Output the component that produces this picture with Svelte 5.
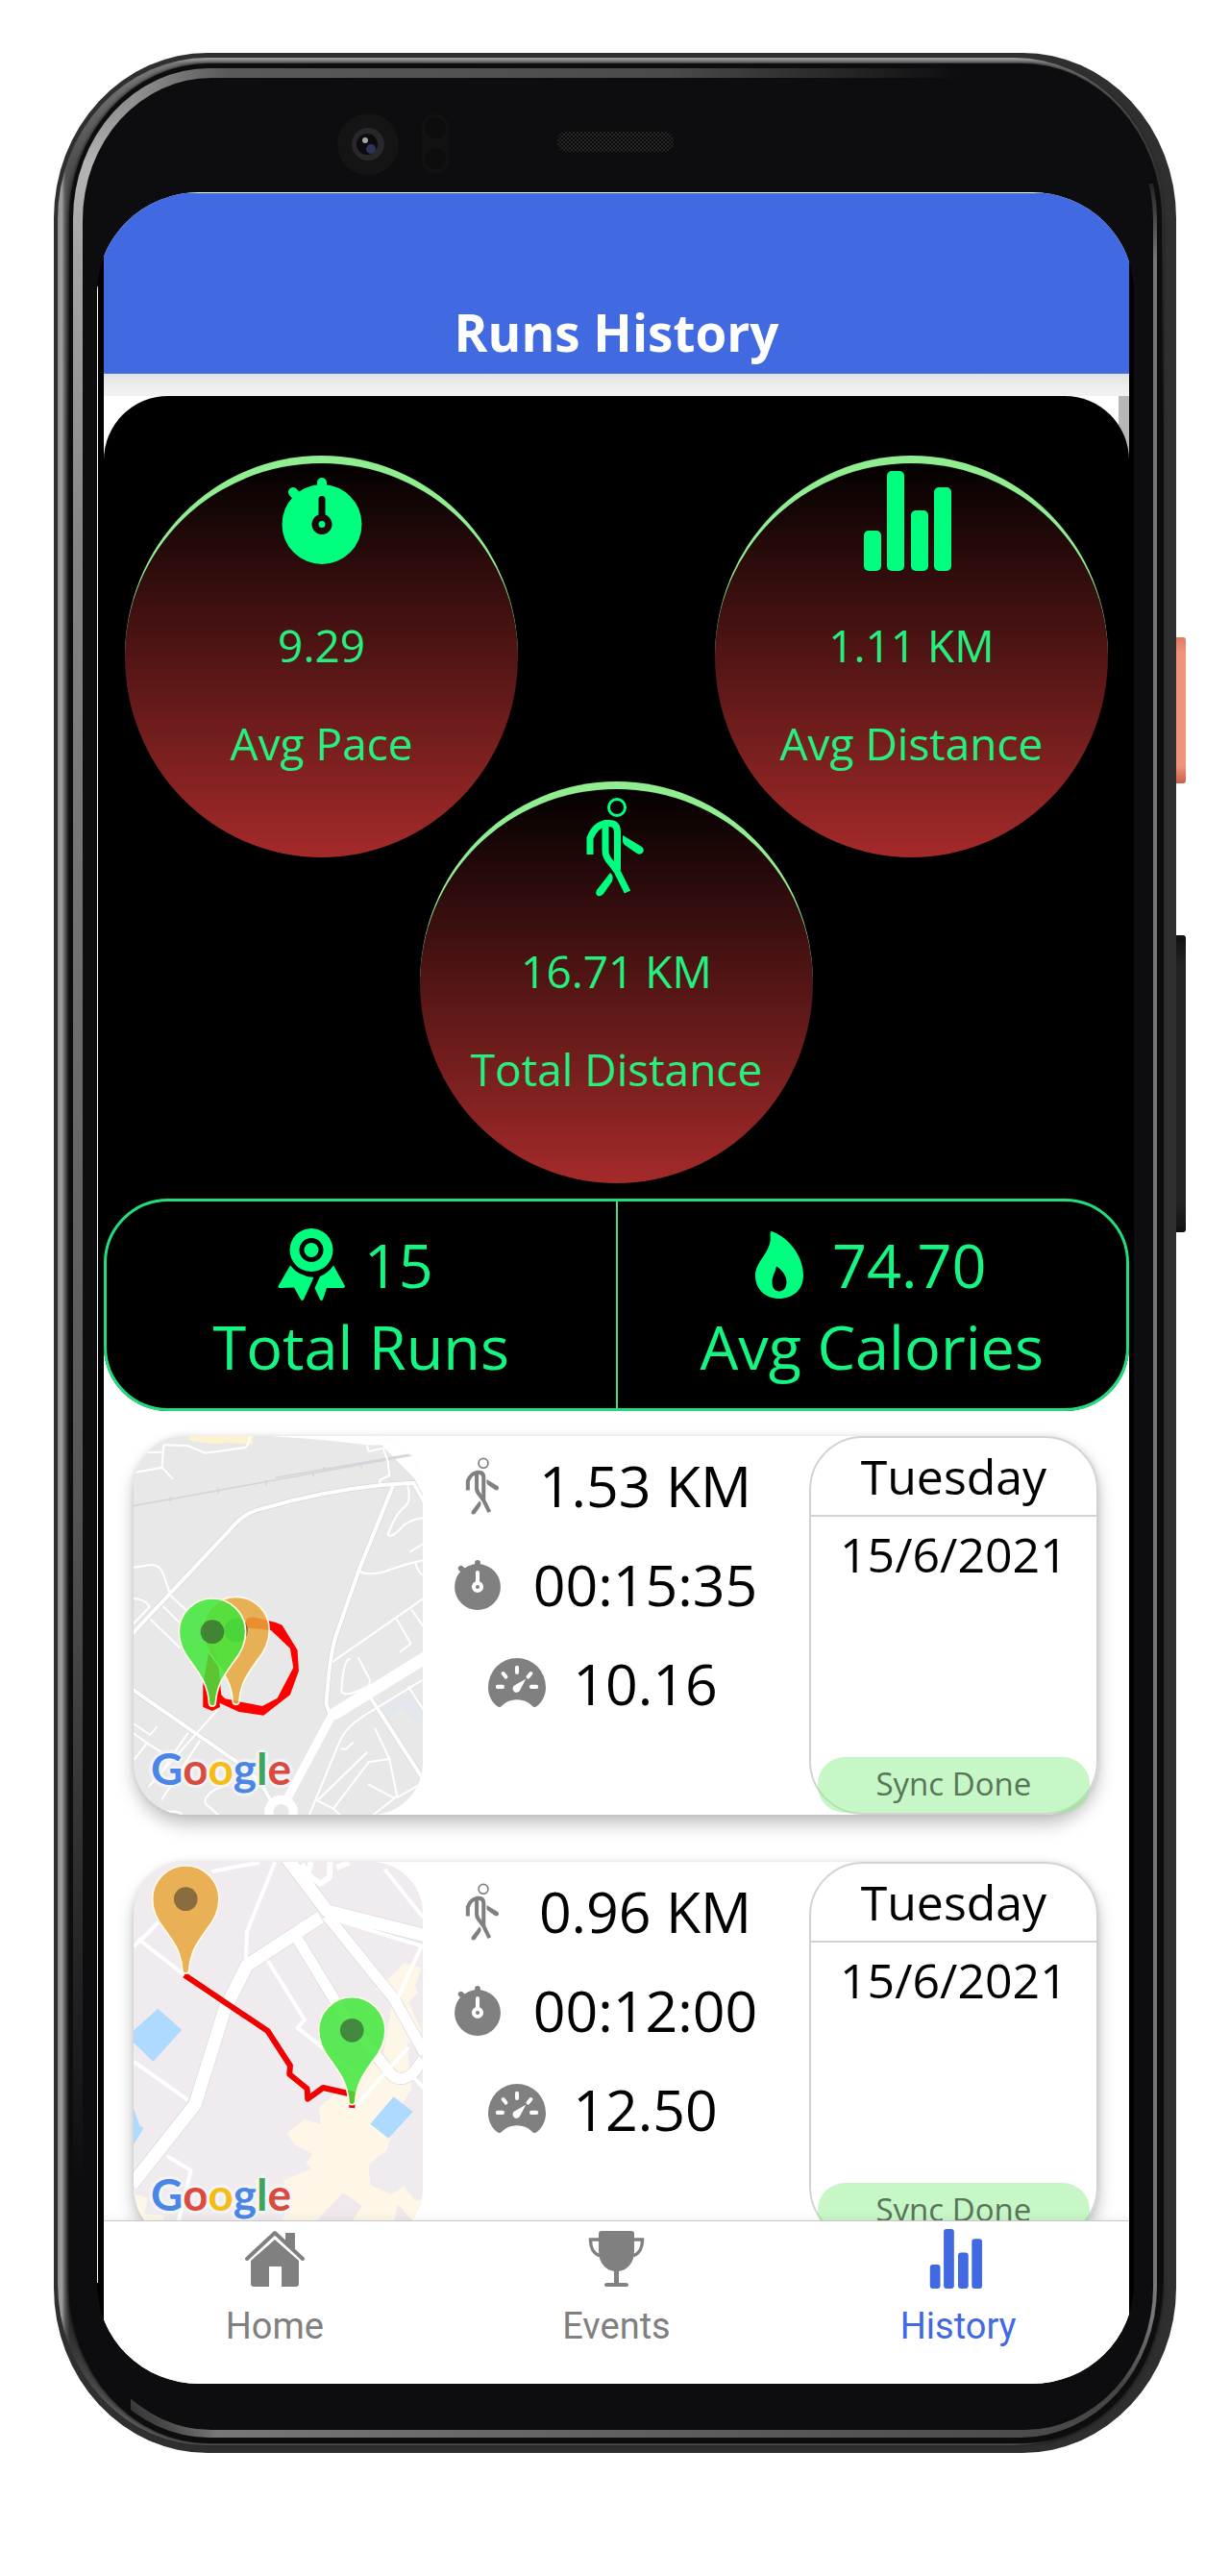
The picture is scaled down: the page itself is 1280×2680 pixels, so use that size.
<script>
  const stats = [
    { icon: 'stopwatch', value: '9.29', label: 'Avg Pace' },
    { icon: 'bars', value: '1.11 KM', label: 'Avg Distance' },
    { icon: 'walk', value: '16.71 KM', label: 'Total Distance' }
  ];
  const totals = [
    { icon: 'ribbon', value: '15', label: 'Total Runs' },
    { icon: 'flame', value: '74.70', label: 'Avg Calories' }
  ];
  const runs = [
    { map: 'loop', distance: '1.53 KM', time: '00:15:35', pace: '10.16', day: 'Tuesday', date: '15/6/2021' },
    { map: 'path', distance: '0.96 KM', time: '00:12:00', pace: '12.50', day: 'Tuesday', date: '15/6/2021' }
  ];
  const tabs = [
    { icon: 'home', label: 'Home' },
    { icon: 'trophy', label: 'Events' },
    { icon: 'bars', label: 'History', active: true }
  ];
  const google = [['G', 'blue'], ['o', 'red'], ['o', 'yellow'], ['g', 'blue'], ['l', 'green'], ['e', 'red']];
</script>

{#snippet icon(name)}
  {#if name === 'stopwatch'}
    <svg class="icon" viewBox="0 0 104 104" aria-hidden="true">
      <path fill-rule="evenodd" d="M52 14a41.500 41.500 0 1 1 0 83a41.500 41.500 0 1 1 0-83zM48.500 29.500a3.500 3.500 0 0 1 7 0V45.600a10.500 10.500 0 1 1-7 0zM52 52a3.500 3.500 0 1 0 0 7a3.500 3.500 0 1 0 0-7z" />
      <path class="line" stroke-width="10" stroke-linecap="round" d="M52 12v6M22 22l6 7" />
    </svg>
  {:else if name === 'bars'}
    <svg class="icon" viewBox="0 0 104 104" aria-hidden="true">
      <rect x="3" y="62" width="18" height="42" rx="5" />
      <rect x="27" y="0" width="18" height="104" rx="5" />
      <rect x="52" y="41" width="18" height="63" rx="5" />
      <rect x="76" y="17" width="18" height="87" rx="5" />
    </svg>
  {:else if name === 'walk'}
    <svg class="icon" viewBox="0 0 104 104" aria-hidden="true">
      <circle class="line" stroke-width="3" cx="52" cy="11" r="8.500" />
      <path class="line" stroke-width="7" d="M24 60V43C27 35 33 29 40 27.500H44Q52.500 27.500 52.500 37V76" />
      <path class="line" stroke-width="7" d="M40 29V56C40 61 42 65 46 69L52 77L63 99" />
      <path d="M58 40L78 52Q81 55 79 58Q76 61 73 59L60 50Q58 48 58 46Z" />
      <path d="M45 79L31 97Q29 101 32 103Q35 104 38 101L47 88Q49 82 45 79Z" />
    </svg>
  {:else if name === 'gauge'}
    <svg class="icon" viewBox="0 0 104 104" aria-hidden="true">
      <path d="M16 92C6 84 0 72 0 58A52 53 0 0 1 104 58C104 72 98 84 88 92Q83 96 79 91Q68 80 52 80Q36 80 25 91Q21 96 16 92Z" />
      <path class="cut" d="M52 22v9M17 57h9M78 57h9M27 33l5 6M77 33l-5 6" />
      <path fill="#fff" d="M68 43L58 62A7 7 0 1 1 48 54Z" />
    </svg>
  {:else if name === 'ribbon'}
    <svg class="icon" viewBox="0 0 70 76" aria-hidden="true">
      <path fill-rule="evenodd" d="M35 0a22.500 22.500 0 1 1 0 45a22.500 22.500 0 1 1 0-45zM35 10a12.500 12.500 0 1 0 0 25a12.500 12.500 0 1 0 0-25z" />
      <circle cx="35" cy="22.500" r="7.500" />
      <path d="M13 38.500L.5 60Q0 62 3 62L17 61.500L24 74Q25.500 76 27 74L37.500 51Q22 50 13 38.500Z" />
      <path d="M58 38.500L70 60Q70 62 67 62L51 62L47 74Q45.500 76 44 74L38.500 62L44 50Q53 46 58 38.500Z" />
    </svg>
  {:else if name === 'flame'}
    <svg class="icon" viewBox="0 0 50 70" aria-hidden="true">
      <path fill-rule="evenodd" d="M17 0C30 4 50 22 50 46C50 61 39 70 25 70C10 70 0 60 0 46C0 30 18 22 15.500 3Q15.500 0 17 0ZM23 37C30 42 32.500 48 32.500 53C32.500 59 29 62.500 25 62.500C20.500 62.500 17.500 59 17.500 53C17.500 46 21 43 21.500 38Q22 36 23 37Z" />
    </svg>
  {:else if name === 'home'}
    <svg class="icon" viewBox="0 0 62 62" aria-hidden="true">
      <path class="line" stroke-width="4" stroke-linecap="round" stroke-linejoin="round" d="M2 31L31 4L60 31" />
      <path d="M42 4h9q1 0 1 1v18L42 14z" />
      <path d="M31 11L56 33V57Q56 60 53 60H38V39H25V60H9Q6 60 6 57V33Z" />
    </svg>
  {:else if name === 'trophy'}
    <svg class="icon" viewBox="0 0 62 62" aria-hidden="true">
      <path d="M16 2H47Q50 2 50 5V23C50 36 42 43 34 44V56H41Q44 56 44 58Q44 60 41 60H22Q19 60 19 58Q19 56 22 56H29V44C21 43 13 36 13 23V5Q13 2 16 2Z" />
      <path class="line" stroke-width="3.500" d="M13 11H4.500C4.500 20 7 25 14 28M50 11H58.500C58.500 20 56 25 49 28" />
    </svg>
  {/if}
{/snippet}

{#snippet pin(color)}
  <path d="M0 0C-3 0-9 0-10-8C-14-70-40-100-65-136C-85-160-104-195-104-232A104 104 0 0 1 104-232C104-195 85-160 65-136C40-100 14-70 10-8C9 0 3 0 0 0Z" fill={color} fill-opacity=".85" stroke="#fffbe8" stroke-width="5" />
  <circle cy="-232" r="37" fill="#2a2a2a" fill-opacity=".5" />
{/snippet}

{#snippet loopMap()}
  <svg class="tiles" viewBox="56 42 904 1182" preserveAspectRatio="xMidYMid slice" aria-hidden="true">
    <rect x="56" y="42" width="904" height="1182" fill="#e8e8e8" />
    <path d="M230 42H430L428 70L350 62L320 68L232 56Z" fill="#fdf2d0" />
    <path d="M480 42L620 52L790 70L830 70L935 178L960 240V42Z" fill="#fff" />
    <path d="M790 74L830 72L935 176L925 185L825 195L850 165L840 90Z" fill="#e6e6e8" />
    <path d="M56 260L925 102M500 172L915 100M172 230v16M320 205v16M470 180v16M618 152v16M650 138v14M768 126v16" fill="none" stroke="#d3d6da" stroke-width="5" />
    <path d="M825 895L925 838L960 870V950L890 890L850 925Z" fill="#e3e6ea" />
    <g fill="none" stroke="#d5d7dc" stroke-width="16" stroke-linejoin="round">
      <path d="M56 655L380 310Q410 280 460 268Q640 215 830 195L930 188L962 245" />
      <path d="M865 200L760 460L690 660Q668 720 658 880L672 915" />
      <path d="M56 835L380 1060L450 1120L485 1180" />
      <path d="M672 915L535 1175M680 910L960 730M800 865L955 1105" />
    </g>
    <g fill="none" stroke="#fff" stroke-linejoin="round" stroke-linecap="round">
      <g stroke-width="6">
        <path d="M60 156L145 140L178 175M145 140L150 70L225 72L280 95L405 78Q420 65 418 42M90 94L145 92" />
        <path d="M785 72L790 90L835 80L850 120L855 165L825 180V192" />
        <path d="M56 452L110 444Q140 444 150 475L172 540L220 585M150 575L200 625M110 615L200 702M56 548Q100 555 106 575L56 628" />
        <path d="M912 195Q925 250 900 265Q875 285 850 350Q860 365 900 320Q930 300 960 298M920 403L960 378M760 462Q780 480 840 465Q910 440 960 430M935 435Q945 470 960 476" />
        <path d="M680 745L960 550M878 615L922 690L890 715M925 585L960 635M730 738Q710 745 705 840Q720 860 790 822L795 805L758 735" />
        <path d="M56 940L108 975L128 950M56 970L98 1000L60 1050M98 1000L160 1040M320 895L105 1135M225 970L150 1080M262 995L145 1175" />
        <path d="M605 1224L700 995Q720 945 800 900L955 805M630 1180L680 1205L790 1060L855 1050L880 1170L940 1135M810 955L855 1050M705 1018L718 1020L740 1000M680 1205L700 1224M785 1030L630 1180M880 1165L805 1224M915 825L960 895M790 1130L870 1172" />
        <path d="M335 1135Q270 1160 282 1190L320 1224M140 1224Q180 1205 205 1220" />
      </g>
      <path stroke-width="12" d="M56 655L380 310Q410 280 460 268Q640 215 830 195L930 188L962 245" />
      <path stroke-width="12" d="M865 200L760 460L690 660Q668 720 658 880L672 915M56 835L380 1060L450 1120L485 1180" />
      <path stroke-width="26" d="M675 915L535 1175" />
      <path stroke-width="38" d="M685 908L965 735" />
      <path stroke-width="12" d="M800 865L955 1105" />
      <circle cx="517" cy="1215" r="38" stroke-width="28" fill="#e8e8e8" />
    </g>
    <path fill="red" fill-rule="evenodd" d="M273 820L290 720L302 690L318 720L330 850L342 862L458 885L505 860L555 765L545 705L485 648L400 640L410 612L430 607L500 624L520 632L568 710L572 775L545 850L462 914L385 903L325 875L326 888L302 900L273 888Z" />
    <g transform="translate(376 880)">{@render pin('#e8a63a')}</g>
    <g transform="translate(302 885)">{@render pin('#3fe83a')}</g>
  </svg>
{/snippet}

{#snippet pathMap()}
  <svg class="tiles" viewBox="56 82 904 1182" preserveAspectRatio="xMidYMid slice" aria-hidden="true">
    <rect x="56" y="82" width="904" height="1182" fill="#efebef" />
    <path d="M900 398L955 412L935 470L945 490L915 520L955 610L940 640L910 650L925 790L900 830L845 985L820 1000L790 1030L795 1090L860 1120L900 1095L935 1140L960 1130V1264H480L530 1180L525 1075L610 1040L595 1020L615 995L560 965L535 930L590 885L640 900L635 850L700 790L720 760L835 690L850 600L865 510L810 480L860 440Z" fill="#fef6e6" />
    <path d="M630 1200L710 1115L770 1155L740 1200ZM860 1264L880 1150L925 1200Z" fill="#efe8ec" />
    <path d="M60 1120L100 1130L90 1180L150 1185V1264H90Z" fill="#fef6e6" />
    <path d="M132 540L207 607L117 705L50 640L58 607ZM868 815L928 862L852 945L795 900ZM56 850L75 905L88 912L56 965Z" fill="#aedaff" />
    <g fill="none" stroke="#d8d9dd" stroke-linejoin="round">
      <path stroke-width="44" d="M50 1090L248 840L340 545L410 405L640 255M535 70L660 235L965 312" />
      <path stroke-width="38" d="M660 250L870 510L965 680M565 318L700 540L860 745Q890 775 930 740L960 700" />
    </g>
    <g fill="none" stroke="#fff" stroke-linejoin="round">
      <path stroke-width="40" d="M50 1090L248 840L340 545L410 405L640 255M535 70L660 235L965 312" />
      <path stroke-width="34" d="M660 250L870 510L965 680M565 318L700 540L860 745Q890 775 930 740L960 700" />
      <path stroke-width="12" d="M498 82L410 300L407 390M300 112L450 84M56 345L80 325L140 265M70 322L310 510M56 705L225 825M160 1000L235 1045L195 1210M475 390L590 575L568 600L745 740M680 260L955 345L880 510M840 105L960 255M735 860L915 660M925 750L965 790" />
      <path stroke-width="18" d="M580 90L610 130L640 150L668 130L670 82M610 82L600 120M690 100L730 84" />
    </g>
    <path fill="none" stroke="#f00000" stroke-width="18" stroke-linejoin="round" d="M215 435L475 610L545 718L543 745L598 790L600 822L648 787L740 808L738 850" />
    <g transform="translate(219 430)">{@render pin('#e8a63a')}</g>
    <g transform="translate(738 840)">{@render pin('#3fe83a')}</g>
  </svg>
{/snippet}

<div class="device">
  <span class="key power"></span>
  <span class="key volume"></span>
  <div class="rim">
    <div class="groove">
      <div class="shine">
        <div class="face">
          <div class="bezel">
            <div class="sensors">
              <svg class="camera" viewBox="0 0 64 64" aria-hidden="true">
                <circle cx="32" cy="32" r="32" fill="#141414" />
                <circle cx="32" cy="32" r="17" fill="#28282b" />
                <circle cx="31" cy="32" r="11" fill="#0b0b10" />
                <circle cx="35" cy="37" r="5" fill="#2c3654" />
                <circle cx="29" cy="28" r="3" fill="#a5a5a5" />
              </svg>
              <svg class="sensor" viewBox="0 0 28 62" aria-hidden="true">
                <rect width="28" height="62" rx="14" fill="#121212" />
                <circle cx="14" cy="14" r="11" fill="#0d0d0d" />
                <circle cx="14" cy="46" r="11" fill="#0d0d0d" />
              </svg>
            </div>
            <span class="speaker"></span>
          </div>

          <div class="glass">
            <div class="screen">
              <header><h1>Runs History</h1></header>
              <div class="strip"></div>

              <main>
                <span class="thumb"></span>
                <section class="summary">
                  <div class="circles">
                    {#each stats as s}
                      <div class="circle">
                        {@render icon(s.icon)}
                        <p class="value">{s.value}</p>
                        <p>{s.label}</p>
                      </div>
                    {/each}
                  </div>
                  <div class="totals">
                    {#each totals as t}
                      <div class="total">
                        <p class="figure">{@render icon(t.icon)}<span>{t.value}</span></p>
                        <p>{t.label}</p>
                      </div>
                    {/each}
                  </div>
                </section>

                <section class="runs">
                  {#each runs as run}
                    <article class="run">
                      <div class="map">
                        {#if run.map === 'loop'}{@render loopMap()}{:else}{@render pathMap()}{/if}
                        <span class="google">{#each google as [ch, tone]}<span class={tone}>{ch}</span>{/each}</span>
                      </div>
                      <div class="metrics">
                        <p>{@render icon('walk')}<span>{run.distance}</span></p>
                        <p>{@render icon('stopwatch')}<span>{run.time}</span></p>
                        <p>{@render icon('gauge')}<span>{run.pace}</span></p>
                      </div>
                      <div class="when">
                        <h2>{run.day}</h2>
                        <p class="date">{run.date}</p>
                        <p class="sync">Sync Done</p>
                      </div>
                    </article>
                  {/each}
                </section>
              </main>

              <nav>
                {#each tabs as t}
                  <a href="#{t.label.toLowerCase()}" class:active={t.active}>
                    {@render icon(t.icon)}
                    <span>{t.label}</span>
                  </a>
                {/each}
              </nav>
            </div>
          </div>
        </div>
      </div>
    </div>
  </div>
</div>

<style>
  :global(body) {
    margin: 0;
    background: #fff;
    font-family: 'Open Sans', 'Noto Sans', sans-serif;
  }
  h1, h2, p { margin: 0; font-weight: 400; }

  .icon { display: block; flex: none; fill: currentColor; }
  .line { fill: none; stroke: currentColor; }
  .cut { fill: none; stroke: #fff; stroke-width: 7; stroke-linecap: round; }

  .device {
    position: relative;
    margin: 55px 56px;
    padding: 5px 13px 8px 4px;
    border-radius: 160px / 172px;
    background: #2f2f2f;
  }
  .key { position: absolute; left: 100%; width: 10px; border-radius: 0 3px 3px 0; }
  .power { top: 608px; height: 152px; background: linear-gradient(#e07a62, #f0937b 10%, #f0937b 88%, #c9604b); }
  .volume { top: 918px; height: 309px; background: linear-gradient(#111, #222 10%, #222 90%, #111); }
  .rim {
    padding: 6px 2px 2px 12px;
    border-radius: 156px / 168px;
    background:
      linear-gradient(to right, #8a8a8a, #a0a0a0 4px, #555 8px, transparent 13px),
      linear-gradient(#a0a0a0, #777 6px, #444 140px, #111 400px, #111 2300px, #666);
  }
  .groove {
    padding: 5px 5px 6px 4px;
    border-radius: 146px / 162px;
    background: #0d0d0f;
    box-shadow: 0 0 4px #000;
  }
  .shine {
    padding: 10px 4px 8px 10px;
    border-radius: 142px / 157px;
    background:
      linear-gradient(to right, transparent 60px, #777 150px, #666 40%, #444) 0 100% / 100% 60px no-repeat,
      linear-gradient(#7a7a7a, #b4b4b4 100px, #a5a5a5 200px, #858585 500px, #555 1500px, #0d0d0f 2200px) 0 0 / 60px 100% no-repeat,
      linear-gradient(to right, #b4b4b4, #5a5a5a 160px, #4a4a4a 55%, #0d0d0f 82%) 0 0 / 100% 120px no-repeat,
      linear-gradient(#0d0d0f 100px, #777 200px, #777 95%, #222);
  }
  .face {
    padding-bottom: 48px;
    border-radius: 134px / 148px;
    background: #0d0d0f;
  }
  .bezel { display: grid; grid-template-columns: 1fr 121px 1fr; align-items: center; height: 119px; padding: 0 5px 0 0; box-sizing: border-box; }
  .sensors { display: flex; justify-content: flex-end; align-items: center; gap: 24px; padding: 19px 113px 0 0; }
  .camera { width: 64px; }
  .sensor { width: 28px; }
  .speaker {
    height: 21px;
    margin-top: 14px;
    border-radius: 9px;
    background: repeating-conic-gradient(#0c0c0c 0 25%, #242424 0 50%) 0 0 / 4px 4px;
  }
  .glass {
    margin: 0 20px 0 15px;
    padding: 1px 5px 0 7px;
    border-radius: 106px / 104px;
    background:
      linear-gradient(transparent 98px, #fff 98px, #fff calc(100% - 105px), transparent calc(100% - 105px)) 0 0 / 1px 100% no-repeat,
      linear-gradient(#fff, #fff) 0 0 / 100% 1px no-repeat,
      #000;
    overflow: hidden;
  }
  .screen { background: #fff; }

  header { padding: 108px 0 5px; border-bottom: 1px solid #5f7fd6; background: #4169e1; text-align: center; }
  h1 { color: #fff; font-size: 53px; font-weight: 700; line-height: 74px; }
  .strip { height: 23px; background: linear-gradient(#e2e2e2, #efefef 60%, #f2f2f2); }

  main { position: relative; height: 1898px; overflow: hidden; }
  .thumb { position: absolute; top: 0; right: 0; width: 11px; height: 900px; background: #b8b8b8; }

  .summary { position: relative; padding-top: 62px; border-radius: 67px; background: #000; color: #00ff7f; text-align: center; }
  .circles { display: flex; flex-wrap: wrap; justify-content: space-between; padding: 0 22px 16px; }
  .circle {
    box-sizing: border-box;
    width: 40%;
    height: 418px;
    padding-top: 8px;
    border-top: 8px solid #90ee90;
    border-radius: 50%;
    background: linear-gradient(#000, #a52a2a) border-box;
    color: #25ef7f;
    font-size: 46px;
    line-height: 62px;
  }
  .circle:nth-child(3) { margin: -79px auto 0; }
  .circle .icon { width: 104px; margin: 0 auto; color: #00ff7f; }
  .value { margin: 46px 0 40px; }

  .totals { display: flex; border: 3px solid #22dd7e; border-radius: 67px; font-size: 63px; line-height: 85px; color: #14f582; }
  .total { flex: 1; padding: 23px 0 22px; }
  .total + .total { border-left: 2px solid #4fd68a; }
  .figure { display: flex; justify-content: center; align-items: center; gap: 20px; padding-right: 12px; }
  .figure .icon { width: 70px; height: 76px; color: #00ff7f; }
  .total + .total .icon { height: 70px; }

  .runs { display: grid; gap: 49px; padding: 26px 32px 49px 31px; }
  .run {
    display: grid;
    grid-template-columns: 3fr 4fr 3fr;
    height: 394px;
    border-radius: 56px;
    background: #fff;
    box-shadow: 0 10px 18px rgba(0, 0, 0, 0.24), 0 0 6px rgba(0, 0, 0, 0.1);
  }
  .map { position: relative; overflow: hidden; border-radius: 54px; }
  .tiles { display: block; width: 100%; height: 100%; }
  .google {
    position: absolute;
    left: 18px;
    bottom: 20px;
    font: 700 46px/56px Lato, sans-serif;
    text-shadow: 0 0 4px #f5f5f8, 3px 0 2px #f5f5f8, -3px 0 2px #f5f5f8, 0 3px 2px #f5f5f8, 0 -3px 2px #f5f5f8;
  }
  .blue { color: #4a86e8; }
  .red { color: #db4a3f; }
  .yellow { color: #f4bc16; }
  .green { color: #3fa558; }

  .metrics { display: flex; flex-direction: column; gap: 22px; padding: 11px 27px 0 0; font-size: 59px; line-height: 81px; }
  .metrics p { display: flex; justify-content: center; align-items: center; gap: 28px; }
  .metrics .icon { width: 60px; color: #808080; }

  .when {
    display: flex;
    flex-direction: column;
    border: 2px solid #d3d3d3;
    border-radius: 56px;
    text-align: center;
    font-size: 50px;
    line-height: 68px;
  }
  h2 { padding: 6px 0; border-bottom: 2px solid #d3d3d3; font-size: 50px; }
  .date { padding-top: 5px; }
  .sync {
    margin: auto 7px 0;
    padding: 5px 0 8px;
    border-radius: 28px;
    background: rgba(144, 238, 144, 0.5);
    color: #587558;
    font-size: 33px;
    line-height: 45px;
  }

  nav { position: relative; display: grid; grid-template-columns: repeat(3, 1fr); padding: 8px 0 37px; border-top: 1px solid #d0d0d0; background: #fff; }
  nav::before { content: ''; position: absolute; left: 0; right: 0; bottom: 100%; height: 10px; background: linear-gradient(transparent, rgba(0, 0, 0, 0.04)); }
  nav a { display: grid; justify-items: center; gap: 16px; color: #808080; font: 38px/46px Roboto, sans-serif; text-decoration: none; }
  nav .icon { width: 62px; }
  nav .active { color: #4169e1; }
</style>
